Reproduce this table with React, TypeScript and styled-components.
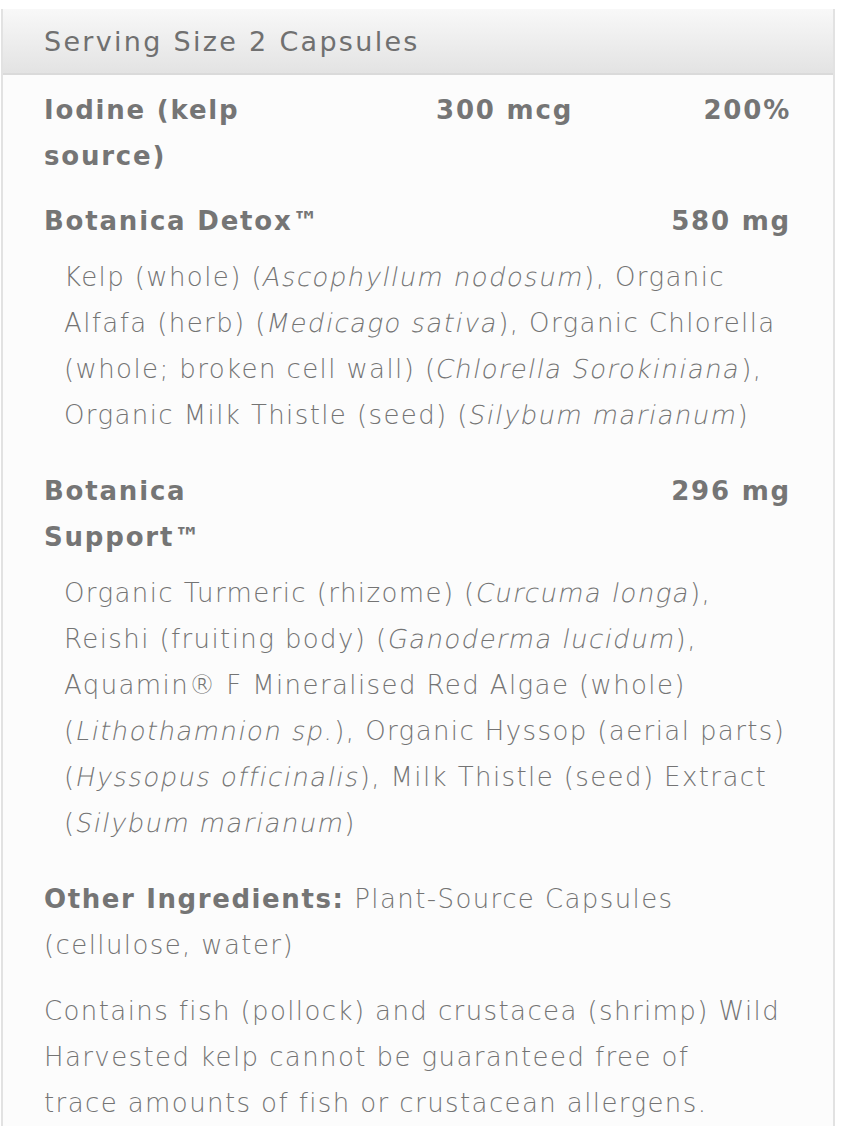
import React from "react";
import styled, { createGlobalStyle } from "styled-components";

const GlobalStyle = createGlobalStyle`
  body {
    margin: 0;
    background: #ffffff;
    font-family: "DejaVu Sans", "Liberation Sans", sans-serif;
    color: #787878;
  }
`;

const Panel = styled.div`
  box-sizing: border-box;
  width: 834px;
  margin: 9px 0 0 1px;
  min-height: 1117px;
  background: #fcfcfc;
  border-left: 2px solid #e2e2e2;
  border-right: 2px solid #e2e2e2;
`;

const Header = styled.div`
  display: flex;
  align-items: center;
  height: 64px;
  padding: 0 41px;
  background: linear-gradient(#f8f8f8, #e3e3e3);
  border-bottom: 2px solid #dadada;
  font-size: 27px;
  font-weight: 400;
  letter-spacing: 2.3px;
  color: #707070;
`;

const Body = styled.div`
  padding: 12px 33px 0 41px;
  font-size: 26px;
  line-height: 46px;
`;

const Row = styled.div<{ $three?: boolean; $space: number }>`
  display: grid;
  grid-template-columns: ${({ $three }) => ($three ? "300px 1fr auto" : "1fr auto")};
  column-gap: 92px;
  margin-top: ${({ $space }) => $space}px;
  padding-right: 9px;
  font-weight: 700;
  letter-spacing: 1.8px;
  color: #757575;
`;

const Name = styled.div<{ $narrow?: boolean }>`
  max-width: ${({ $narrow }) => ($narrow ? "300px" : "none")};
`;

const Amount = styled.div<{ $right?: boolean }>`
  text-align: ${({ $right }) => ($right ? "right" : "left")};
  white-space: nowrap;
`;

const Ingredients = styled.p`
  margin: 10px 0 0 0;
  padding-left: 20px;
  font-weight: 300;
  letter-spacing: 1.4px;
  color: #747474;
`;

const Binomial = styled.span`
  white-space: nowrap;
`;

const Latin = styled.span`
  display: inline-block;
  transform: skewX(-11deg);
`;

const Note = styled.p<{ $space: number }>`
  margin: ${({ $space }) => $space}px 0 0 0;
  padding-right: 19px;
  font-weight: 300;
  letter-spacing: 1.4px;
  color: #747474;

  strong {
    font-weight: 700;
    letter-spacing: 1.6px;
    color: #757575;
  }
`;

const Species = ({ name }: { name: string }) => (
  <Binomial>
    (<Latin>{name}</Latin>)
  </Binomial>
);

const App = () => {
  return (
    <>
      <GlobalStyle />
      <Panel>
        <Header>Serving Size 2 Capsules</Header>
        <Body>
          <Row $three $space={0}>
            <Name>Iodine (kelp source)</Name>
            <Amount>300 mcg</Amount>
            <Amount $right>200%</Amount>
          </Row>

          <Row $space={19}>
            <Name $narrow>Botanica Detox™</Name>
            <Amount $right>580 mg</Amount>
          </Row>
          <Ingredients>
            Kelp (whole) <Species name="Ascophyllum nodosum" />, Organic Alfafa (herb){" "}
            <Species name="Medicago sativa" />, Organic Chlorella (whole; broken cell wall){" "}
            <Species name="Chlorella Sorokiniana" />, Organic Milk Thistle (seed){" "}
            <Species name="Silybum marianum" />
          </Ingredients>

          <Row $space={30}>
            <Name $narrow>Botanica Support™</Name>
            <Amount $right>296 mg</Amount>
          </Row>
          <Ingredients>
            Organic Turmeric (rhizome) <Species name="Curcuma longa" />, Reishi (fruiting
            body) <Species name="Ganoderma lucidum" />, Aquamin® F Mineralised Red Algae
            (whole) <Species name="Lithothamnion sp." />, Organic Hyssop (aerial parts){" "}
            <Species name="Hyssopus officinalis" />, Milk Thistle (seed) Extract{" "}
            <Species name="Silybum marianum" />
          </Ingredients>

          <Note $space={30}>
            <strong>Other Ingredients:</strong> Plant-Source Capsules (cellulose, water)
          </Note>
          <Note $space={20}>
            Contains fish (pollock) and crustacea (shrimp) Wild Harvested kelp cannot be
            guaranteed free of
            <br />
            trace amounts of fish or crustacean allergens.
          </Note>
        </Body>
      </Panel>
    </>
  );
};

export default App;
